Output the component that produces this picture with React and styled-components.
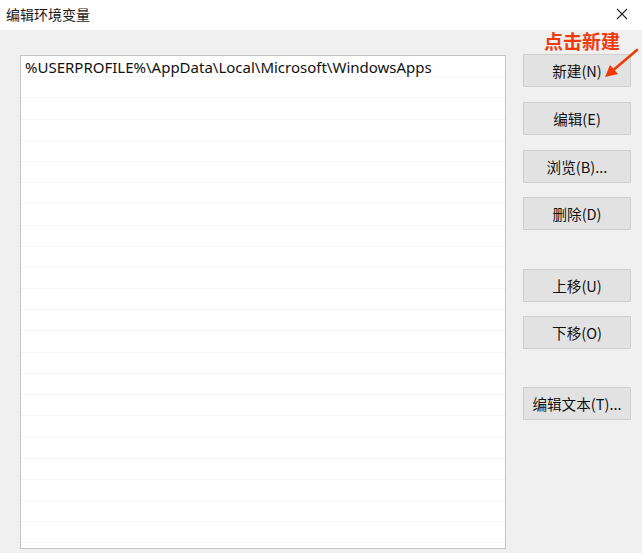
import styled, { createGlobalStyle } from "styled-components";

const GlobalStyle = createGlobalStyle`
  html, body {
    margin: 0;
    padding: 0;
    background: #f0f0f0;
  }
  body {
    font-family: "Noto Sans", "Noto Sans CJK SC", sans-serif;
  }
`;

const rows = Array.from({ length: 23 }, (_, i) =>
  i === 0 ? "%USERPROFILE%\\AppData\\Local\\Microsoft\\WindowsApps" : ""
);

const buttons = [
  { label: "新建(N)", top: 0 },
  { label: "编辑(E)", top: 15 },
  { label: "浏览(B)...", top: 15 },
  { label: "删除(D)", top: 14 },
  { label: "上移(U)", top: 39 },
  { label: "下移(O)", top: 14 },
  { label: "编辑文本(T)...", top: 38 },
];

export default function App() {
  return (
    <>
      <GlobalStyle />
      <Dialog>
        <TitleBar>
          <Title>编辑环境变量</Title>
          <Close>
            <svg width="12" height="12" viewBox="0 0 12 12">
              <path d="M1 1 L11 11 M11 1 L1 11" stroke="#222" strokeWidth="1.1" />
            </svg>
          </Close>
        </TitleBar>

        <Body>
          <List>
            {rows.map((text, i) => (
              <Row key={i}>{text}</Row>
            ))}
          </List>

          <Side>
            {buttons.map((b) => (
              <Button key={b.label} $top={b.top}>
                {b.label}
              </Button>
            ))}
          </Side>

          <Note>点击新建</Note>
          <Arrow width="40" height="32" viewBox="0 0 40 32">
            <path d="M35 2 L9 24" stroke="#ef3b0c" strokeWidth="2.6" strokeLinecap="round" />
            <path d="M3 29 L8 17 L16 26 Z" fill="#ef3b0c" />
          </Arrow>
        </Body>
      </Dialog>
    </>
  );
}

const Dialog = styled.div`
  width: 642px;
  height: 553px;
  display: flex;
  flex-direction: column;
  background: #f0f0f0;
`;

const TitleBar = styled.div`
  height: 30px;
  background: #fff;
  display: flex;
  align-items: center;
  justify-content: space-between;
  padding: 0 14px 2px 6px;
  box-sizing: border-box;
`;

const Title = styled.span`
  font-family: "Noto Sans CJK SC", sans-serif;
  font-size: 14px;
  color: #1a1a1a;
`;

const Close = styled.span`
  display: flex;
  align-items: center;
`;

const Body = styled.div`
  position: relative;
  flex: 1;
  display: flex;
  padding: 25px 11px 0 20px;
  gap: 17px;
`;

const List = styled.div`
  width: 486px;
  height: 494px;
  box-sizing: border-box;
  background: #fff;
  border: 1px solid #c4c4c4;
  overflow: hidden;
`;

const Row = styled.div`
  height: 21.2px;
  box-sizing: border-box;
  border-bottom: 1px solid #f4f4f4;
  padding-left: 4px;
  font-family: "Noto Sans", sans-serif;
  font-size: 15px;
  line-height: 22px;
  color: #111;
  white-space: nowrap;
`;

const Side = styled.div`
  display: flex;
  flex-direction: column;
  margin-top: -1px;
`;

const Button = styled.div`
  width: 108px;
  height: 33px;
  margin-top: ${(p) => p.$top}px;
  box-sizing: border-box;
  background: #e2e2e2;
  border: 1px solid #cfcfcf;
  display: flex;
  align-items: center;
  justify-content: center;
  font-family: "Noto Sans CJK SC", sans-serif;
  font-size: 14.6px;
  color: #111;
`;

const Note = styled.div`
  position: absolute;
  left: 544px;
  top: 0px;
  font-family: "Noto Sans CJK SC", sans-serif;
  font-weight: 700;
  font-size: 19px;
  line-height: 22px;
  color: #ef3b0c;
`;

const Arrow = styled.svg`
  position: absolute;
  left: 602px;
  top: 18px;
`;
